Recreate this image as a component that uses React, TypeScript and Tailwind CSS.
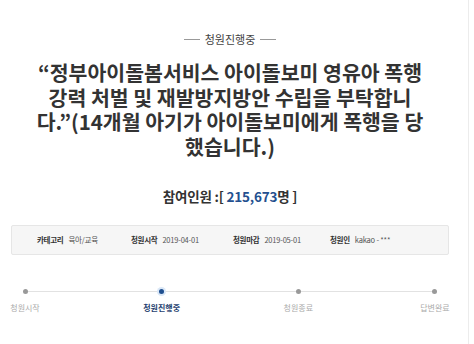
const font = { fontFamily: '"Noto Sans CJK KR", "Noto Sans", sans-serif' };

const info = [
  { label: "카테고리", value: "육아/교육", w: "w-[94px]" },
  { label: "청원시작", value: "2019-04-01", w: "w-[102px]" },
  { label: "청원마감", value: "2019-05-01", w: "w-[97px]" },
  { label: "청원인", value: "kakao - ***", w: "w-[80px]" },
];

const steps = ["청원시작", "청원진행중", "청원종료", "답변완료"];

const App = () => {
  return (
    <div className="w-[474px] h-[344px] bg-white overflow-hidden" style={font}>
      <div className="w-[469px] h-[344px] border-r border-[#ececec]">
        <div className="w-[460px] flex flex-col items-center">
          <div className="mt-[31px] flex items-center gap-[5px] text-[11px] leading-[16px] text-[#444]">
            <span className="w-[16px] h-px bg-[#999]" />
            <span>청원진행중</span>
            <span className="w-[16px] h-px bg-[#999]" />
          </div>

          <h1 className="mt-[13px] text-center text-[20.5px] leading-[24.5px] font-bold text-[#333] whitespace-nowrap">
            “정부아이돌봄서비스 아이돌보미 영유아 폭행
            <br />
            강력 처벌 및 재발방지방안 수립을 부탁합니
            <br />
            다.”(14개월 아기가 아이돌보미에게 폭행을 당
            <br />
            했습니다.)
          </h1>

          <p className="mt-[29px] text-[13.5px] leading-[18px] font-bold text-[#333] tracking-[-0.2px]">
            참여인원 :[ <span className="text-[#24508f]">215,673</span>명 ]
          </p>

          <div className="mt-[20px] w-[438px] h-[30px] bg-[#f6f6f6] border border-[#e6e6e6] rounded-[2px] flex items-center pl-[25px] text-[7.5px] whitespace-nowrap">
            {info.map((i) => (
              <div key={i.label} className={`${i.w} flex items-center gap-[5px]`}>
                <span className="font-bold text-[#333] tracking-[-0.3px]">{i.label}</span>
                <span className="text-[#555] tracking-[-0.2px]">{i.value}</span>
              </div>
            ))}
          </div>

          <div className="relative mt-[32px] w-[460px] flex justify-between">
            <div className="absolute left-[24px] right-[24px] top-[4px] h-px bg-[#e2e2e2]" />
            {steps.map((s, idx) => (
              <div key={s} className="relative w-[50px] flex flex-col items-center">
                {idx === 1 ? (
                  <span className="w-[9px] h-[9px] rounded-full bg-[#dbe8f7] flex items-center justify-center">
                    <span className="w-[5px] h-[5px] rounded-full bg-[#1f4f8f]" />
                  </span>
                ) : (
                  <span className="mt-[2px] mb-[2px] w-[5px] h-[5px] rounded-full bg-[#999]" />
                )}
                <span
                  className={
                    idx === 1
                      ? "mt-[6px] text-[8px] leading-[12px] font-bold text-[#1f3f6f] whitespace-nowrap"
                      : "mt-[6px] text-[8px] leading-[12px] text-[#aaa] whitespace-nowrap"
                  }
                >
                  {s}
                </span>
              </div>
            ))}
          </div>
        </div>
      </div>
    </div>
  );
};

export default App;
